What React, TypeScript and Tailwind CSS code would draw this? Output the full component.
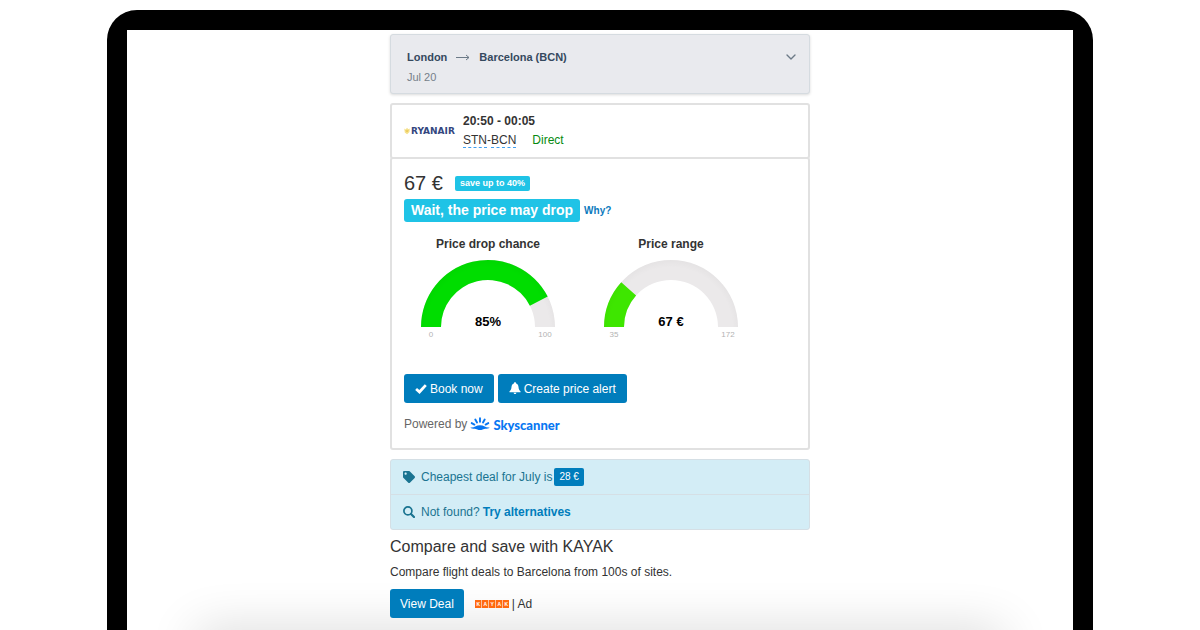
import React from "react"
import { ChevronDown } from "lucide-react"
import { FaTag } from "react-icons/fa"

interface GaugeProps {
  title: string
  value: number
  min: number
  max: number
  label: string
  color: string
}

const CX = 84
const CY = 75
const OUTER = 67
const INNER = 47

// ring slice between two fractions of the half circle, left to right
function arc(from: number, to: number) {
  const point = (r: number, t: number) => {
    const a = Math.PI * (1 - t)
    return `${(CX + r * Math.cos(a)).toFixed(2)} ${(CY - r * Math.sin(a)).toFixed(2)}`
  }
  return `M${point(OUTER, from)} A${OUTER} ${OUTER} 0 0 1 ${point(OUTER, to)} L${point(INNER, to)} A${INNER} ${INNER} 0 0 0 ${point(INNER, from)}Z`
}

function Gauge({ title, value, min, max, label, color }: GaugeProps) {
  return (
    <div className="w-[168px]">
      <h3 className="text-center text-xs leading-4 font-bold text-[#333333]">{title}</h3>
      <svg viewBox="0 0 168 100" className="block w-full" role="img" aria-label={title}>
        <defs>
          <radialGradient id="ring" gradientUnits="userSpaceOnUse" cx={CX} cy={CY + 2} r="70">
            <stop offset="0.88" stopColor="#000" stopOpacity="0" />
            <stop offset="1" stopColor="#000" stopOpacity="0.03" />
          </radialGradient>
        </defs>
        <path d={arc(0, 1)} fill="#ebe9ea" />
        <path d={arc(0, (value - min) / (max - min))} fill={color} />
        <path d={arc(0, 1)} fill="url(#ring)" />
        <g textAnchor="middle">
          <text x={CX} y="74" fontSize="13" fontWeight="bold" fill="#000">{label}</text>
          <text x="27" y="85" fontSize="8" fill="#b3b3b3">{min}</text>
          <text x="141" y="85" fontSize="8" fill="#b3b3b3">{max}</text>
        </g>
      </svg>
    </div>
  )
}

function CheckIcon() {
  return (
    <svg viewBox="0 0 12 12" className="h-3 w-3" fill="currentColor" aria-hidden="true">
      <path d="M.2 6.900 2 5l2.300 2.100L9.800 1.200l2 1.700L4.600 10.900Z" />
    </svg>
  )
}

function BellIcon() {
  return (
    <svg viewBox="0 0 12 14" className="h-3.5 w-3" fill="currentColor" aria-hidden="true">
      <path d="M6 .3c.7 0 1.100.5 1.100 1.100C8.700 2 9.300 3.200 9.500 5c.2 2.200.7 3.300 2 4.300v.9H.5v-.9c1.300-1 1.800-2.100 2-4.300.2-1.800.8-3 2.400-3.600C4.900.8 5.300.3 6 .3ZM4.600 10.800h2.800c-.1.800-.7 1.300-1.400 1.300s-1.300-.5-1.400-1.300Z" />
    </svg>
  )
}

function SearchIcon() {
  return (
    <svg viewBox="0 0 12 12" className="mr-1.5 h-3 w-3" fill="none" stroke="currentColor" aria-hidden="true">
      <circle cx="4.900" cy="4.900" r="4" strokeWidth="1.700" />
      <path d="m8 8 3 3" strokeWidth="2.200" strokeLinecap="round" />
    </svg>
  )
}

function RyanairLogo() {
  return (
    <div className="flex w-[51px] items-center gap-px font-['DejaVu_Sans',sans-serif]" aria-label="Ryanair">
      <svg viewBox="0 0 7 8" className="h-2 w-1.5 shrink-0" aria-hidden="true">
        <path d="M.3 1.200 2 2.200 3.500.3 5 2.100l1.700-1-.3 4.200L3.600 7.700.9 5.800Z" fill="#f5e08a" />
        <path d="m2.300 3 1.200 2 1.400-2.200" fill="none" stroke="#e6bd3c" strokeWidth=".9" />
      </svg>
      <span className="text-[9px] leading-3 font-bold text-[#34477f]">RYANAIR</span>
    </div>
  )
}

function SkyscannerLogo() {
  return (
    <span className="flex items-center gap-[3px] text-[#0877f2]">
      <svg viewBox="0 0 20 14" className="h-3.5 w-5" fill="none" stroke="currentColor" strokeWidth="1.900" strokeLinecap="round" aria-hidden="true">
        <path d="M10 1.300v3.400M5.300 2.500l1.700 3M14.700 2.500l-1.700 3M1.700 6.100l2.700 1.500M18.300 6.100l-2.700 1.500" />
        <path d="M.4 10.400c2 .3 3.300 0 4.800-.9 3-1.700 6.600-1.700 9.600 0 1.500.9 2.800 1.200 4.800.9-.9 1.100-2.600 1.300-4.200 1.400-1.800.2-3.600 1.300-5.400 1.300s-3.600-1.100-5.400-1.300c-1.600-.1-3.300-.3-4.200-1.400Z" fill="currentColor" stroke="none" />
      </svg>
      <span className="pt-0.5 font-['Lato',sans-serif] text-[13px] leading-[18px] font-black">Skyscanner</span>
    </span>
  )
}

function KayakLogo() {
  return (
    <svg viewBox="0 0 34 8" className="h-2 w-[34px]" role="img" aria-label="KAYAK">
      {"KAYAK".split("").map((letter, i) => (
        <g key={i}>
          <rect x={i * 7} width="6.400" height="8" fill="#ff690f" />
          <text x={i * 7 + 3.200} y="6" fontSize="5" fontWeight="bold" textAnchor="middle" fill="#fff">{letter}</text>
        </g>
      ))}
    </svg>
  )
}

const button = "flex h-[29px] items-center gap-[3px] rounded-[3px] bg-[#007dbc] text-xs text-white"
const stop = "border-b border-dashed border-[#3f9ff0] no-underline"

export default function App() {
  return (
    <div className="flex h-screen flex-col overflow-hidden bg-white px-[107px] pt-2.5 font-['Liberation_Sans',Arial,sans-serif] text-xs text-[#333333]">
      <div className="flex flex-1 flex-col rounded-t-[30px] bg-black px-5 pt-5">
        <main className="relative flex-1 overflow-hidden bg-white pt-1">
          <div className="pointer-events-none absolute inset-x-[70px] top-full h-10 shadow-[0_0_50px_rgba(0,0,0,0.16)]" />

          <div className="relative mx-auto flex max-w-[420px] flex-col gap-[9px]">
            <header className="flex items-start justify-between rounded-[3px] border border-[#d5dbe0] bg-[#e9eaee] px-4 pt-3 pb-1.5 text-[11px] leading-5 shadow-[0_1px_3px_rgba(0,0,0,0.15)]">
              <div>
                <div className="flex items-center font-bold text-[#35495e]">
                  <span>London</span>
                  <svg viewBox="0 0 14 8" className="mx-[9px] h-2 w-3.5" fill="none" stroke="#6c7a87" aria-hidden="true">
                    <path d="M0 4.500h13M10 2l3 2.500L10 7" />
                  </svg>
                  <span>Barcelona (BCN)</span>
                </div>
                <p className="text-[#76808a]">Jul 20</p>
              </div>
              <button aria-label="Show search" className="-mr-1.5 flex h-5 items-center text-[#6c7a87]">
                <ChevronDown className="h-4 w-4" strokeWidth={2} />
              </button>
            </header>

            <article>
              <div className="flex items-center gap-2 rounded-[3px] border-2 border-[#e1e1e1] px-3 py-[7px] leading-[19px]">
                <RyanairLogo />
                <div>
                  <p className="font-bold">20:50 - 00:05</p>
                  <p>
                    <abbr className={stop}>STN</abbr>-<abbr className={stop}>BCN</abbr>
                    <span className="ml-4 text-[#068a10]">Direct</span>
                  </p>
                </div>
              </div>

              <div className="-mt-0.5 rounded-[3px] border-2 border-[#e1e1e1] px-3 pt-3 pb-3.5">
                <div className="flex items-center gap-3">
                  <span className="text-xl leading-6">67 €</span>
                  <span className="rounded-[2px] bg-[#1fc3e6] px-[5px] text-[9px] leading-[15px] font-bold text-white">save up to 40%</span>
                </div>
                <div className="mt-1 flex items-center gap-1">
                  <strong className="rounded-[3px] bg-[#1fc3e6] px-[7px] text-sm leading-[23px] text-white">Wait, the price may drop</strong>
                  <a href="#why" className="text-[10px] font-bold text-[#0b79bd]">Why?</a>
                </div>

                <div className="mt-3.5 flex gap-[15px]">
                  <Gauge title="Price drop chance" value={85} min={0} max={100} label="85%" color="#00dd00" />
                  <Gauge title="Price range" value={67} min={35} max={172} label="67 €" color="#3ee600" />
                </div>

                <div className="mt-[22px] flex gap-1">
                  <button className={`${button} px-[11px]`}>
                    <CheckIcon />
                    Book now
                  </button>
                  <button className={`${button} px-[11px]`}>
                    <BellIcon />
                    Create price alert
                  </button>
                </div>
                <div className="mt-[11px] flex items-center gap-[3px] leading-5 text-[#666666]">
                  Powered by
                  <SkyscannerLogo />
                </div>
              </div>
            </article>

            <ul className="divide-y divide-[#d5dfe5] rounded-[3px] border border-[#d5dfe5] bg-[#d3edf6] leading-[34px] text-[#1a7491]">
              <li className="flex items-center px-3">
                <FaTag className="mr-1.5 h-3 w-3" />
                Cheapest deal for July is
                <a href="#cheapest" className="ml-0.5 rounded-[2px] bg-[#007dbc] px-[5px] text-[10px] leading-[18px] text-white">28 €</a>
              </li>
              <li className="flex items-center px-3">
                <SearchIcon />
                Not found?
                <a href="#alternatives" className="ml-[3px] font-bold text-[#007dbc]">Try alternatives</a>
              </li>
            </ul>

            <section>
              <h2 className="text-base leading-4 font-normal">Compare and save with KAYAK</h2>
              <p className="mt-[7px] leading-5">Compare flight deals to Barcelona from 100s of sites.</p>
              <div className="mt-[7px] flex items-center gap-[11px]">
                <button className={`${button} px-2.5`}>View Deal</button>
                <div className="flex items-center gap-[3px]">
                  <KayakLogo />
                  <span>| Ad</span>
                </div>
              </div>
            </section>
          </div>
        </main>
      </div>
    </div>
  )
}
